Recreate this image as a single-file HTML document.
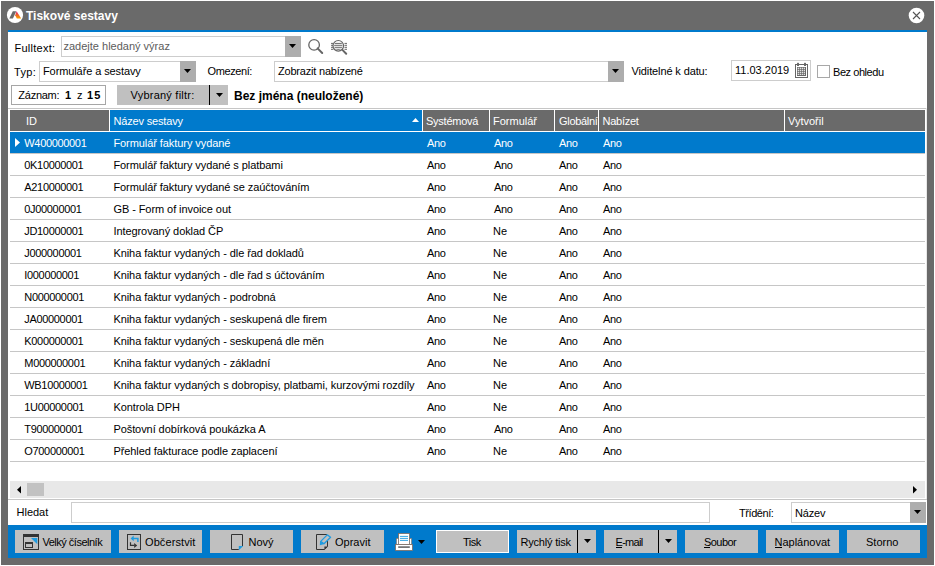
<!DOCTYPE html>
<html><head><meta charset="utf-8"><title>Tiskové sestavy</title>
<style>
html,body{margin:0;padding:0;}
body{width:935px;height:566px;overflow:hidden;background:#fff;position:relative;font-family:"Liberation Sans",sans-serif;font-size:11px;color:#000;}
.a{position:absolute;}
.t{position:absolute;white-space:nowrap;}
svg.a{display:block;}
u{text-decoration:none;border-bottom:1px solid #000;}
</style></head><body>
<div class="a" style="left:1px;top:1px;width:933px;height:564px;background:#6a6a6a;"></div>
<div class="a" style="left:8px;top:30px;width:919px;height:2px;background:#007acc;"></div>
<div class="a" style="left:8px;top:32px;width:919px;height:493px;background:#fff;"></div>
<div class="a" style="left:8px;top:525px;width:919px;height:33px;background:#007acc;"></div>
<svg class="a" style="left:6px;top:6px" width="18" height="18" viewBox="0 0 18 18"><defs><linearGradient id="lg" x1="0" y1="0" x2="0" y2="1"><stop offset="0" stop-color="#e0117f"/><stop offset="0.55" stop-color="#f26a1f"/><stop offset="1" stop-color="#f7a400"/></linearGradient></defs><circle cx="9" cy="9" r="8.1" fill="#fff"/><path d="M6.8 5.2H10.3L6.9 12.4H3.3Z" fill="#6a6a6a"/><path d="M10.6 5.3L15.2 12.6H10.8L9.2 9.2Z" fill="url(#lg)"/></svg>
<div class="t" style="left:26px;top:8.54px;font-size:12px;line-height:15px;font-weight:700;color:#fff;">Tiskové sestavy</div>
<svg class="a" style="left:908px;top:7px" width="17" height="17" viewBox="0 0 17 17"><circle cx="8.5" cy="8.5" r="7.8" fill="#fff"/><path d="M5 5L12 12M12 5L5 12" stroke="#555" stroke-width="1.1"/></svg>
<div class="t" style="left:14.5px;top:41.19px;font-size:11px;line-height:14px;font-weight:400;color:#000;letter-spacing:0.25px;">Fulltext:</div>
<div class="a" style="left:61px;top:36px;width:238px;height:19px;border:1px solid #cdcdcd;background:#fff"></div>
<div class="a" style="left:285px;top:36px;width:16px;height:21px;background:#adadad;"></div>
<svg class="a" style="left:289.0px;top:44px" width="7" height="4" viewBox="0 0 7 4"><path d="M0 0H7L3.5 4Z" fill="#000"/></svg>
<div class="t" style="left:63.5px;top:39.49px;font-size:11px;line-height:14px;font-weight:400;color:#5c5c5c;">zadejte hledaný výraz</div>
<svg class="a" style="left:306px;top:37px" width="20" height="20" viewBox="0 0 20 20"><circle cx="8.1" cy="7.9" r="5.3" fill="none" stroke="#666" stroke-width="1.3"/><path d="M11.6 11.4L16.2 16" stroke="#666" stroke-width="2" stroke-linecap="round"/></svg>
<svg class="a" style="left:329px;top:37px" width="20" height="20" viewBox="0 0 20 20"><defs><clipPath id="cc"><circle cx="9.3" cy="8.8" r="4.2"/></clipPath></defs><circle cx="9.3" cy="8.8" r="5.3" fill="none" stroke="#666" stroke-width="1.2"/><path d="M2 6.4H4.4M2 8.3H4M2 10.3H4M2 12.3H4.4M15.5 6.4H18M15.5 8.3H18M15.5 10.3H18M15.5 12.3H18" stroke="#666" stroke-width="1"/><g clip-path="url(#cc)"><path d="M4 6.4H15M4 8.3H15M4 10.3H15M4 12.3H15" stroke="#666" stroke-width="1"/></g><path d="M13.4 12.9L17.2 16.8" stroke="#666" stroke-width="2" stroke-linecap="round"/></svg>
<div class="t" style="left:14px;top:64.89px;font-size:11px;line-height:14px;font-weight:400;color:#000;letter-spacing:0.3px;">Typ:</div>
<div class="a" style="left:39px;top:61px;width:155px;height:19px;border:1px solid #cdcdcd;background:#fff"></div>
<div class="a" style="left:180px;top:61px;width:16px;height:21px;background:#adadad;"></div>
<svg class="a" style="left:184.0px;top:69px" width="7" height="4" viewBox="0 0 7 4"><path d="M0 0H7L3.5 4Z" fill="#000"/></svg>
<div class="t" style="left:43px;top:64.19px;font-size:11px;line-height:14px;font-weight:400;color:#000;letter-spacing:-0.1px;">Formuláře a sestavy</div>
<div class="t" style="left:207.5px;top:64.19px;font-size:11px;line-height:14px;font-weight:400;color:#000;letter-spacing:-0.4px;">Omezení:</div>
<div class="a" style="left:274px;top:61px;width:348px;height:19px;border:1px solid #cdcdcd;background:#fff"></div>
<div class="a" style="left:608px;top:61px;width:16px;height:21px;background:#adadad;"></div>
<svg class="a" style="left:612.0px;top:69px" width="7" height="4" viewBox="0 0 7 4"><path d="M0 0H7L3.5 4Z" fill="#000"/></svg>
<div class="t" style="left:278px;top:64.19px;font-size:11px;line-height:14px;font-weight:400;color:#000;letter-spacing:-0.2px;">Zobrazit nabízené</div>
<div class="t" style="left:631.5px;top:63.89px;font-size:11px;line-height:14px;font-weight:400;color:#000;letter-spacing:-0.12px;">Viditelné k datu:</div>
<div class="a" style="left:731px;top:60px;width:78px;height:19px;border:1px solid #cdcdcd;background:#fff"></div>
<div class="t" style="left:735px;top:63.49px;font-size:11px;line-height:14px;font-weight:400;color:#000;">11.03.2019</div>
<svg class="a" style="left:795px;top:62px" width="13" height="16" viewBox="0 0 13 16"><rect x="0.5" y="2.5" width="12" height="13" fill="#fff" stroke="#666"/><rect x="2" y="5" width="9" height="9" fill="#666"/><g fill="#fff"><rect x="2.7" y="5.7" width="1.2" height="1.2"/><rect x="4.7" y="5.7" width="1.2" height="1.2"/><rect x="6.7" y="5.7" width="1.2" height="1.2"/><rect x="8.7" y="5.7" width="1.2" height="1.2"/><rect x="2.7" y="7.7" width="1.2" height="1.2"/><rect x="4.7" y="7.7" width="1.2" height="1.2"/><rect x="6.7" y="7.7" width="1.2" height="1.2"/><rect x="8.7" y="7.7" width="1.2" height="1.2"/><rect x="2.7" y="9.7" width="1.2" height="1.2"/><rect x="4.7" y="9.7" width="1.2" height="1.2"/><rect x="6.7" y="9.7" width="1.2" height="1.2"/><rect x="8.7" y="9.7" width="1.2" height="1.2"/><rect x="2.7" y="11.7" width="1.2" height="1.2"/><rect x="4.7" y="11.7" width="1.2" height="1.2"/><rect x="6.7" y="11.7" width="1.2" height="1.2"/><rect x="8.7" y="11.7" width="1.2" height="1.2"/></g><rect x="2" y="0.8" width="2" height="3.2" rx="0.6" fill="#666"/><rect x="9" y="0.8" width="2" height="3.2" rx="0.6" fill="#666"/></svg>
<div class="a" style="left:817px;top:65px;width:11px;height:11px;border:1px solid #a8a8a8;background:#fff"></div>
<div class="t" style="left:833px;top:64.69px;font-size:11px;line-height:14px;font-weight:400;color:#000;letter-spacing:-0.44px;">Bez ohledu</div>
<div class="a" style="left:11px;top:85px;width:93px;height:18px;border:1px solid #a6a6a6;background:#fff"></div>
<div class="t" style="left:18.3px;top:87.69px;font-size:11px;line-height:14px;font-weight:400;color:#000;letter-spacing:-0.25px;">Záznam:</div>
<div class="t" style="left:65px;top:87.69px;font-size:11px;line-height:14px;font-weight:700;color:#000;">1</div>
<div class="t" style="left:77px;top:87.69px;font-size:11px;line-height:14px;font-weight:400;color:#000;">z</div>
<div class="t" style="left:86.9px;top:87.69px;font-size:11px;line-height:14px;font-weight:700;color:#000;letter-spacing:1.2px;">15</div>
<div class="a" style="left:117px;top:85px;width:111px;height:20px;background:#c0c0c0;"></div>
<div class="a" style="left:209px;top:85px;width:1px;height:20px;background:#000;"></div>
<div class="t" style="left:130.5px;top:87.69px;font-size:11px;line-height:14px;font-weight:400;color:#000;letter-spacing:0.23px;">Vybraný filtr:</div>
<svg class="a" style="left:216.0px;top:93px" width="7" height="4" viewBox="0 0 7 4"><path d="M0 0H7L3.5 4Z" fill="#000"/></svg>
<div class="t" style="left:234px;top:89.04px;font-size:12px;line-height:15px;font-weight:700;color:#000;">Bez jména (neuložené)</div>
<div class="a" style="left:8px;top:108px;width:918px;height:1px;background:#c6c6c6;"></div>
<div class="a" style="left:10px;top:110px;width:99px;height:21px;background:#6a6a6a;"></div>
<div class="t" style="left:26px;top:113.99px;font-size:11px;line-height:14px;font-weight:400;color:#fff;">ID</div>
<div class="a" style="left:110px;top:110px;width:312px;height:21px;background:#007acc;"></div>
<div class="t" style="left:113.5px;top:113.99px;font-size:11px;line-height:14px;font-weight:400;color:#fff;letter-spacing:-0.17px;">Název sestavy</div>
<div class="a" style="left:423px;top:110px;width:66px;height:21px;background:#6a6a6a;"></div>
<div class="t" style="left:426px;top:113.99px;font-size:11px;line-height:14px;font-weight:400;color:#fff;letter-spacing:-0.25px;">Systémová</div>
<div class="a" style="left:490px;top:110px;width:64px;height:21px;background:#6a6a6a;"></div>
<div class="t" style="left:493px;top:113.99px;font-size:11px;line-height:14px;font-weight:400;color:#fff;">Formulář</div>
<div class="a" style="left:555px;top:110px;width:43px;height:21px;background:#6a6a6a;"></div>
<div class="t" style="left:559px;top:113.99px;font-size:11px;line-height:14px;font-weight:400;color:#fff;letter-spacing:-0.3px;">Globální</div>
<div class="a" style="left:599px;top:110px;width:185px;height:21px;background:#6a6a6a;"></div>
<div class="t" style="left:602.5px;top:113.99px;font-size:11px;line-height:14px;font-weight:400;color:#fff;letter-spacing:-0.25px;">Nabízet</div>
<div class="a" style="left:785px;top:110px;width:140px;height:21px;background:#6a6a6a;"></div>
<div class="t" style="left:788px;top:113.99px;font-size:11px;line-height:14px;font-weight:400;color:#fff;">Vytvořil</div>
<svg class="a" style="left:412px;top:118px" width="7" height="4" viewBox="0 0 7 4"><path d="M0 4H7L3.5 0Z" fill="#fff"/></svg>
<div class="a" style="left:10px;top:132px;width:915px;height:21px;background:#007acc;"></div>
<svg class="a" style="left:15px;top:138px" width="5" height="9" viewBox="0 0 5 9"><path d="M0 0L5 4.5L0 9Z" fill="#fff"/></svg>
<div class="a" style="left:10px;top:153px;width:915px;height:1px;background:#c6c6c6;"></div>
<div class="t" style="left:24.3px;top:136.19px;font-size:11px;line-height:14px;font-weight:400;color:#fff;letter-spacing:-0.33px;">W400000001</div>
<div class="t" style="left:113.4px;top:136.19px;font-size:11px;line-height:14px;font-weight:400;color:#fff;letter-spacing:-0.07px;">Formulář faktury vydané</div>
<div class="t" style="left:427px;top:136.19px;font-size:11px;line-height:14px;font-weight:400;color:#fff;letter-spacing:-0.3px;">Ano</div>
<div class="t" style="left:494px;top:136.19px;font-size:11px;line-height:14px;font-weight:400;color:#fff;letter-spacing:-0.3px;">Ano</div>
<div class="t" style="left:559px;top:136.19px;font-size:11px;line-height:14px;font-weight:400;color:#fff;letter-spacing:-0.3px;">Ano</div>
<div class="t" style="left:603px;top:136.19px;font-size:11px;line-height:14px;font-weight:400;color:#fff;letter-spacing:-0.3px;">Ano</div>
<div class="a" style="left:10px;top:175px;width:915px;height:1px;background:#c6c6c6;"></div>
<div class="t" style="left:24.3px;top:158.19px;font-size:11px;line-height:14px;font-weight:400;color:#000;letter-spacing:-0.33px;">0K10000001</div>
<div class="t" style="left:113.4px;top:158.19px;font-size:11px;line-height:14px;font-weight:400;color:#000;letter-spacing:-0.07px;">Formulář faktury vydané s platbami</div>
<div class="t" style="left:427px;top:158.19px;font-size:11px;line-height:14px;font-weight:400;color:#000;letter-spacing:-0.3px;">Ano</div>
<div class="t" style="left:494px;top:158.19px;font-size:11px;line-height:14px;font-weight:400;color:#000;letter-spacing:-0.3px;">Ano</div>
<div class="t" style="left:559px;top:158.19px;font-size:11px;line-height:14px;font-weight:400;color:#000;letter-spacing:-0.3px;">Ano</div>
<div class="t" style="left:603px;top:158.19px;font-size:11px;line-height:14px;font-weight:400;color:#000;letter-spacing:-0.3px;">Ano</div>
<div class="a" style="left:10px;top:197px;width:915px;height:1px;background:#c6c6c6;"></div>
<div class="t" style="left:24.3px;top:180.19px;font-size:11px;line-height:14px;font-weight:400;color:#000;letter-spacing:-0.33px;">A210000001</div>
<div class="t" style="left:113.4px;top:180.19px;font-size:11px;line-height:14px;font-weight:400;color:#000;letter-spacing:-0.07px;">Formulář faktury vydané se zaúčtováním</div>
<div class="t" style="left:427px;top:180.19px;font-size:11px;line-height:14px;font-weight:400;color:#000;letter-spacing:-0.3px;">Ano</div>
<div class="t" style="left:494px;top:180.19px;font-size:11px;line-height:14px;font-weight:400;color:#000;letter-spacing:-0.3px;">Ano</div>
<div class="t" style="left:559px;top:180.19px;font-size:11px;line-height:14px;font-weight:400;color:#000;letter-spacing:-0.3px;">Ano</div>
<div class="t" style="left:603px;top:180.19px;font-size:11px;line-height:14px;font-weight:400;color:#000;letter-spacing:-0.3px;">Ano</div>
<div class="a" style="left:10px;top:219px;width:915px;height:1px;background:#c6c6c6;"></div>
<div class="t" style="left:24.3px;top:202.19px;font-size:11px;line-height:14px;font-weight:400;color:#000;letter-spacing:-0.33px;">0J00000001</div>
<div class="t" style="left:113.4px;top:202.19px;font-size:11px;line-height:14px;font-weight:400;color:#000;letter-spacing:-0.07px;">GB - Form of invoice out</div>
<div class="t" style="left:427px;top:202.19px;font-size:11px;line-height:14px;font-weight:400;color:#000;letter-spacing:-0.3px;">Ano</div>
<div class="t" style="left:494px;top:202.19px;font-size:11px;line-height:14px;font-weight:400;color:#000;letter-spacing:-0.3px;">Ano</div>
<div class="t" style="left:559px;top:202.19px;font-size:11px;line-height:14px;font-weight:400;color:#000;letter-spacing:-0.3px;">Ano</div>
<div class="t" style="left:603px;top:202.19px;font-size:11px;line-height:14px;font-weight:400;color:#000;letter-spacing:-0.3px;">Ano</div>
<div class="a" style="left:10px;top:241px;width:915px;height:1px;background:#c6c6c6;"></div>
<div class="t" style="left:24.3px;top:224.19px;font-size:11px;line-height:14px;font-weight:400;color:#000;letter-spacing:-0.33px;">JD10000001</div>
<div class="t" style="left:113.4px;top:224.19px;font-size:11px;line-height:14px;font-weight:400;color:#000;letter-spacing:-0.07px;">Integrovaný doklad ČP</div>
<div class="t" style="left:427px;top:224.19px;font-size:11px;line-height:14px;font-weight:400;color:#000;letter-spacing:-0.3px;">Ano</div>
<div class="t" style="left:493px;top:224.19px;font-size:11px;line-height:14px;font-weight:400;color:#000;">Ne</div>
<div class="t" style="left:559px;top:224.19px;font-size:11px;line-height:14px;font-weight:400;color:#000;letter-spacing:-0.3px;">Ano</div>
<div class="t" style="left:603px;top:224.19px;font-size:11px;line-height:14px;font-weight:400;color:#000;letter-spacing:-0.3px;">Ano</div>
<div class="a" style="left:10px;top:263px;width:915px;height:1px;background:#c6c6c6;"></div>
<div class="t" style="left:24.3px;top:246.19px;font-size:11px;line-height:14px;font-weight:400;color:#000;letter-spacing:-0.33px;">J000000001</div>
<div class="t" style="left:113.4px;top:246.19px;font-size:11px;line-height:14px;font-weight:400;color:#000;letter-spacing:-0.07px;">Kniha faktur vydaných - dle řad dokladů</div>
<div class="t" style="left:427px;top:246.19px;font-size:11px;line-height:14px;font-weight:400;color:#000;letter-spacing:-0.3px;">Ano</div>
<div class="t" style="left:493px;top:246.19px;font-size:11px;line-height:14px;font-weight:400;color:#000;">Ne</div>
<div class="t" style="left:559px;top:246.19px;font-size:11px;line-height:14px;font-weight:400;color:#000;letter-spacing:-0.3px;">Ano</div>
<div class="t" style="left:603px;top:246.19px;font-size:11px;line-height:14px;font-weight:400;color:#000;letter-spacing:-0.3px;">Ano</div>
<div class="a" style="left:10px;top:285px;width:915px;height:1px;background:#c6c6c6;"></div>
<div class="t" style="left:24.3px;top:268.19px;font-size:11px;line-height:14px;font-weight:400;color:#000;letter-spacing:-0.33px;">I000000001</div>
<div class="t" style="left:113.4px;top:268.19px;font-size:11px;line-height:14px;font-weight:400;color:#000;letter-spacing:-0.07px;">Kniha faktur vydaných - dle řad s účtováním</div>
<div class="t" style="left:427px;top:268.19px;font-size:11px;line-height:14px;font-weight:400;color:#000;letter-spacing:-0.3px;">Ano</div>
<div class="t" style="left:493px;top:268.19px;font-size:11px;line-height:14px;font-weight:400;color:#000;">Ne</div>
<div class="t" style="left:559px;top:268.19px;font-size:11px;line-height:14px;font-weight:400;color:#000;letter-spacing:-0.3px;">Ano</div>
<div class="t" style="left:603px;top:268.19px;font-size:11px;line-height:14px;font-weight:400;color:#000;letter-spacing:-0.3px;">Ano</div>
<div class="a" style="left:10px;top:307px;width:915px;height:1px;background:#c6c6c6;"></div>
<div class="t" style="left:24.3px;top:290.19px;font-size:11px;line-height:14px;font-weight:400;color:#000;letter-spacing:-0.33px;">N000000001</div>
<div class="t" style="left:113.4px;top:290.19px;font-size:11px;line-height:14px;font-weight:400;color:#000;letter-spacing:-0.07px;">Kniha faktur vydaných - podrobná</div>
<div class="t" style="left:427px;top:290.19px;font-size:11px;line-height:14px;font-weight:400;color:#000;letter-spacing:-0.3px;">Ano</div>
<div class="t" style="left:493px;top:290.19px;font-size:11px;line-height:14px;font-weight:400;color:#000;">Ne</div>
<div class="t" style="left:559px;top:290.19px;font-size:11px;line-height:14px;font-weight:400;color:#000;letter-spacing:-0.3px;">Ano</div>
<div class="t" style="left:603px;top:290.19px;font-size:11px;line-height:14px;font-weight:400;color:#000;letter-spacing:-0.3px;">Ano</div>
<div class="a" style="left:10px;top:329px;width:915px;height:1px;background:#c6c6c6;"></div>
<div class="t" style="left:24.3px;top:312.19px;font-size:11px;line-height:14px;font-weight:400;color:#000;letter-spacing:-0.33px;">JA00000001</div>
<div class="t" style="left:113.4px;top:312.19px;font-size:11px;line-height:14px;font-weight:400;color:#000;letter-spacing:-0.07px;">Kniha faktur vydaných - seskupená dle firem</div>
<div class="t" style="left:427px;top:312.19px;font-size:11px;line-height:14px;font-weight:400;color:#000;letter-spacing:-0.3px;">Ano</div>
<div class="t" style="left:493px;top:312.19px;font-size:11px;line-height:14px;font-weight:400;color:#000;">Ne</div>
<div class="t" style="left:559px;top:312.19px;font-size:11px;line-height:14px;font-weight:400;color:#000;letter-spacing:-0.3px;">Ano</div>
<div class="t" style="left:603px;top:312.19px;font-size:11px;line-height:14px;font-weight:400;color:#000;letter-spacing:-0.3px;">Ano</div>
<div class="a" style="left:10px;top:351px;width:915px;height:1px;background:#c6c6c6;"></div>
<div class="t" style="left:24.3px;top:334.19px;font-size:11px;line-height:14px;font-weight:400;color:#000;letter-spacing:-0.33px;">K000000001</div>
<div class="t" style="left:113.4px;top:334.19px;font-size:11px;line-height:14px;font-weight:400;color:#000;letter-spacing:-0.07px;">Kniha faktur vydaných - seskupená dle měn</div>
<div class="t" style="left:427px;top:334.19px;font-size:11px;line-height:14px;font-weight:400;color:#000;letter-spacing:-0.3px;">Ano</div>
<div class="t" style="left:493px;top:334.19px;font-size:11px;line-height:14px;font-weight:400;color:#000;">Ne</div>
<div class="t" style="left:559px;top:334.19px;font-size:11px;line-height:14px;font-weight:400;color:#000;letter-spacing:-0.3px;">Ano</div>
<div class="t" style="left:603px;top:334.19px;font-size:11px;line-height:14px;font-weight:400;color:#000;letter-spacing:-0.3px;">Ano</div>
<div class="a" style="left:10px;top:373px;width:915px;height:1px;background:#c6c6c6;"></div>
<div class="t" style="left:24.3px;top:356.19px;font-size:11px;line-height:14px;font-weight:400;color:#000;letter-spacing:-0.33px;">M000000001</div>
<div class="t" style="left:113.4px;top:356.19px;font-size:11px;line-height:14px;font-weight:400;color:#000;letter-spacing:-0.07px;">Kniha faktur vydaných - základní</div>
<div class="t" style="left:427px;top:356.19px;font-size:11px;line-height:14px;font-weight:400;color:#000;letter-spacing:-0.3px;">Ano</div>
<div class="t" style="left:493px;top:356.19px;font-size:11px;line-height:14px;font-weight:400;color:#000;">Ne</div>
<div class="t" style="left:559px;top:356.19px;font-size:11px;line-height:14px;font-weight:400;color:#000;letter-spacing:-0.3px;">Ano</div>
<div class="t" style="left:603px;top:356.19px;font-size:11px;line-height:14px;font-weight:400;color:#000;letter-spacing:-0.3px;">Ano</div>
<div class="a" style="left:10px;top:395px;width:915px;height:1px;background:#c6c6c6;"></div>
<div class="t" style="left:24.3px;top:378.19px;font-size:11px;line-height:14px;font-weight:400;color:#000;letter-spacing:-0.33px;">WB10000001</div>
<div class="t" style="left:113.4px;top:378.19px;font-size:11px;line-height:14px;font-weight:400;color:#000;letter-spacing:-0.07px;">Kniha faktur vydaných s dobropisy, platbami, kurzovými rozdíly</div>
<div class="t" style="left:427px;top:378.19px;font-size:11px;line-height:14px;font-weight:400;color:#000;letter-spacing:-0.3px;">Ano</div>
<div class="t" style="left:493px;top:378.19px;font-size:11px;line-height:14px;font-weight:400;color:#000;">Ne</div>
<div class="t" style="left:559px;top:378.19px;font-size:11px;line-height:14px;font-weight:400;color:#000;letter-spacing:-0.3px;">Ano</div>
<div class="t" style="left:603px;top:378.19px;font-size:11px;line-height:14px;font-weight:400;color:#000;letter-spacing:-0.3px;">Ano</div>
<div class="a" style="left:10px;top:417px;width:915px;height:1px;background:#c6c6c6;"></div>
<div class="t" style="left:24.3px;top:400.19px;font-size:11px;line-height:14px;font-weight:400;color:#000;letter-spacing:-0.33px;">1U00000001</div>
<div class="t" style="left:113.4px;top:400.19px;font-size:11px;line-height:14px;font-weight:400;color:#000;letter-spacing:-0.07px;">Kontrola DPH</div>
<div class="t" style="left:427px;top:400.19px;font-size:11px;line-height:14px;font-weight:400;color:#000;letter-spacing:-0.3px;">Ano</div>
<div class="t" style="left:493px;top:400.19px;font-size:11px;line-height:14px;font-weight:400;color:#000;">Ne</div>
<div class="t" style="left:559px;top:400.19px;font-size:11px;line-height:14px;font-weight:400;color:#000;letter-spacing:-0.3px;">Ano</div>
<div class="t" style="left:603px;top:400.19px;font-size:11px;line-height:14px;font-weight:400;color:#000;letter-spacing:-0.3px;">Ano</div>
<div class="a" style="left:10px;top:439px;width:915px;height:1px;background:#c6c6c6;"></div>
<div class="t" style="left:24.3px;top:422.19px;font-size:11px;line-height:14px;font-weight:400;color:#000;letter-spacing:-0.33px;">T900000001</div>
<div class="t" style="left:113.4px;top:422.19px;font-size:11px;line-height:14px;font-weight:400;color:#000;letter-spacing:-0.07px;">Poštovní dobírková poukázka A</div>
<div class="t" style="left:427px;top:422.19px;font-size:11px;line-height:14px;font-weight:400;color:#000;letter-spacing:-0.3px;">Ano</div>
<div class="t" style="left:494px;top:422.19px;font-size:11px;line-height:14px;font-weight:400;color:#000;letter-spacing:-0.3px;">Ano</div>
<div class="t" style="left:559px;top:422.19px;font-size:11px;line-height:14px;font-weight:400;color:#000;letter-spacing:-0.3px;">Ano</div>
<div class="t" style="left:603px;top:422.19px;font-size:11px;line-height:14px;font-weight:400;color:#000;letter-spacing:-0.3px;">Ano</div>
<div class="a" style="left:10px;top:461px;width:915px;height:1px;background:#c6c6c6;"></div>
<div class="t" style="left:24.3px;top:444.19px;font-size:11px;line-height:14px;font-weight:400;color:#000;letter-spacing:-0.33px;">O700000001</div>
<div class="t" style="left:113.4px;top:444.19px;font-size:11px;line-height:14px;font-weight:400;color:#000;letter-spacing:-0.07px;">Přehled fakturace podle zaplacení</div>
<div class="t" style="left:427px;top:444.19px;font-size:11px;line-height:14px;font-weight:400;color:#000;letter-spacing:-0.3px;">Ano</div>
<div class="t" style="left:493px;top:444.19px;font-size:11px;line-height:14px;font-weight:400;color:#000;">Ne</div>
<div class="t" style="left:559px;top:444.19px;font-size:11px;line-height:14px;font-weight:400;color:#000;letter-spacing:-0.3px;">Ano</div>
<div class="t" style="left:603px;top:444.19px;font-size:11px;line-height:14px;font-weight:400;color:#000;letter-spacing:-0.3px;">Ano</div>
<div class="a" style="left:10px;top:481px;width:915px;height:17px;background:#e8e8e8;"></div>
<div class="a" style="left:27px;top:483px;width:17px;height:13px;background:#c2c2c2;"></div>
<svg class="a" style="left:17px;top:486px" width="4" height="8" viewBox="0 0 4 8"><path d="M4 0V7.4L0 3.7Z" fill="#000"/></svg>
<svg class="a" style="left:913px;top:486px" width="4" height="8" viewBox="0 0 4 8"><path d="M0 0V7.4L4 3.7Z" fill="#000"/></svg>
<div class="a" style="left:8px;top:499px;width:919px;height:1px;background:#c6c6c6;"></div>
<div class="a" style="left:926px;top:108px;width:1px;height:391px;background:#e8e8e8;"></div>
<div class="t" style="left:16.5px;top:505.19px;font-size:11px;line-height:14px;font-weight:400;color:#000;">Hledat</div>
<div class="a" style="left:71px;top:502px;width:637px;height:19px;border:1px solid #cdcdcd;background:#fff"></div>
<div class="t" style="left:739px;top:506.19px;font-size:11px;line-height:14px;font-weight:400;color:#000;letter-spacing:-0.43px;">Třídění:</div>
<div class="a" style="left:791px;top:502px;width:133px;height:19px;border:1px solid #cdcdcd;background:#fff"></div>
<div class="a" style="left:910px;top:502px;width:16px;height:21px;background:#adadad;"></div>
<svg class="a" style="left:914.0px;top:510px" width="7" height="4" viewBox="0 0 7 4"><path d="M0 0H7L3.5 4Z" fill="#000"/></svg>
<div class="t" style="left:795px;top:506.19px;font-size:11px;line-height:14px;font-weight:400;color:#000;letter-spacing:-0.2px;">Název</div>
<div class="a" style="left:15px;top:530px;width:96px;height:23px;background:#c0c0c0;"></div>
<div class="t" style="left:42.5px;top:534.79px;font-size:11px;line-height:14px;font-weight:400;color:#000;letter-spacing:-0.5px;">Velký číselník</div>
<svg class="a" style="left:23px;top:534px" width="16" height="16" viewBox="0 0 16 16"><rect x="0.5" y="0.5" width="15" height="15" fill="none" stroke="#333"/><rect x="0" y="0" width="16" height="3" fill="#333"/><path d="M8 4H14.3V10.2Z" fill="#1e9be0"/><rect x="2.5" y="8.5" width="7" height="5" fill="none" stroke="#333"/><rect x="2" y="8" width="8" height="2" fill="#333"/></svg>
<div class="a" style="left:119px;top:530px;width:83px;height:23px;background:#c0c0c0;"></div>
<div class="t" style="left:145px;top:534.79px;font-size:11px;line-height:14px;font-weight:400;color:#000;letter-spacing:0.1px;">Občerstvit</div>
<svg class="a" style="left:127px;top:534px" width="14" height="16" viewBox="0 0 14 16"><rect x="0.5" y="0.5" width="13" height="15" fill="none" stroke="#333"/><path d="M6 4.4H10.9V8.1" fill="none" stroke="#1e9be0" stroke-width="1.5"/><path d="M3.6 4.4L6.7 1.6V7.2Z" fill="#1e9be0"/><path d="M3.5 8.2V11.4H7.5" fill="none" stroke="#333" stroke-width="1.2"/><path d="M10.2 11.4L7.2 8.9V13.9Z" fill="#333"/></svg>
<div class="a" style="left:210px;top:530px;width:83px;height:23px;background:#c0c0c0;"></div>
<div class="t" style="left:248.5px;top:534.79px;font-size:11px;line-height:14px;font-weight:400;color:#000;">Nový</div>
<svg class="a" style="left:231px;top:534px" width="12" height="16" viewBox="0 0 12 16"><path d="M7.8 15.5H0.5V0.5H11.5V12" fill="none" stroke="#333"/><path d="M7.8 12H12.2L7.8 16.2Z" fill="#1e9be0"/></svg>
<div class="a" style="left:301px;top:530px;width:83px;height:23px;background:#c0c0c0;"></div>
<div class="t" style="left:335px;top:534.79px;font-size:11px;line-height:14px;font-weight:400;color:#000;">Opravit</div>
<svg class="a" style="left:316px;top:534px" width="17" height="16" viewBox="0 0 17 16"><path d="M10.8 0.5H0.5V15.5H8.6L11.5 12.6V6.8" fill="none" stroke="#333"/><path d="M8.4 15.6V12.4H11.6Z" fill="#333"/><path d="M11.3 0.9L14.6 3.2L8 9.7L4.7 7.4Z" fill="none" stroke="#1e9be0" stroke-width="1.3" stroke-linejoin="round"/><path d="M4.1 7L8.5 10.1L3.8 11.2Z" fill="#1e9be0"/></svg>
<svg class="a" style="left:394px;top:532px" width="20" height="20" viewBox="0 0 20 20"><rect x="4.5" y="1.5" width="11" height="11" fill="#fff" stroke="#7a6a60" stroke-width="0.8"/><path d="M6 4.4H14M6 6.4H14M6 8.4H14" stroke="#1e9be0" stroke-width="0.9"/><rect x="2.4" y="6.4" width="2" height="6" fill="#fff" stroke="#7a6a60" stroke-width="0.6"/><rect x="15.6" y="6.4" width="2" height="6" fill="#fff" stroke="#7a6a60" stroke-width="0.6"/><rect x="1.5" y="12.5" width="17" height="6" fill="#fff" stroke="#7a6a60" stroke-width="0.8"/><rect x="4.2" y="14.3" width="11.6" height="1.6" fill="#666"/></svg>
<svg class="a" style="left:418.0px;top:540px" width="7" height="4" viewBox="0 0 7 4"><path d="M0 0H7L3.5 4Z" fill="#000"/></svg>
<div class="a" style="left:436px;top:530px;width:71px;height:21px;border:1px solid #fff;background:#c0c0c0"></div>
<div class="t" style="left:463px;top:534.79px;font-size:11px;line-height:14px;font-weight:400;color:#000;letter-spacing:-0.5px;">Tisk</div>
<div class="a" style="left:517px;top:530px;width:79px;height:23px;background:#c0c0c0;"></div>
<div class="t" style="left:520.5px;top:534.79px;font-size:11px;line-height:14px;font-weight:400;color:#000;letter-spacing:-0.2px;">Rychlý tisk</div>
<div class="a" style="left:577px;top:530px;width:1px;height:23px;background:#000;"></div>
<svg class="a" style="left:584.0px;top:539px" width="7" height="4" viewBox="0 0 7 4"><path d="M0 0H7L3.5 4Z" fill="#000"/></svg>
<div class="a" style="left:604px;top:530px;width:73px;height:23px;background:#c0c0c0;"></div>
<div class="t" style="left:615.5px;top:534.79px;font-size:11px;line-height:14px;font-weight:400;color:#000;letter-spacing:-0.7px;">E-mail</div>
<div class="a" style="left:616px;top:547px;width:6px;height:1px;background:#000;"></div>
<div class="a" style="left:658px;top:530px;width:1px;height:23px;background:#000;"></div>
<svg class="a" style="left:664.5px;top:539px" width="7" height="4" viewBox="0 0 7 4"><path d="M0 0H7L3.5 4Z" fill="#000"/></svg>
<div class="a" style="left:685px;top:530px;width:73px;height:23px;background:#c0c0c0;"></div>
<div class="t" style="left:704px;top:534.79px;font-size:11px;line-height:14px;font-weight:400;color:#000;letter-spacing:-0.55px;">Soubor</div>
<div class="a" style="left:704px;top:547px;width:6px;height:1px;background:#000;"></div>
<div class="a" style="left:766px;top:530px;width:73px;height:23px;background:#c0c0c0;"></div>
<div class="t" style="left:774.5px;top:534.79px;font-size:11px;line-height:14px;font-weight:400;color:#000;">Naplánovat</div>
<div class="a" style="left:775px;top:547px;width:7px;height:1px;background:#000;"></div>
<div class="a" style="left:847px;top:530px;width:73px;height:23px;background:#c0c0c0;"></div>
<div class="t" style="left:866px;top:534.79px;font-size:11px;line-height:14px;font-weight:400;color:#000;">Storno</div>
</body></html>
